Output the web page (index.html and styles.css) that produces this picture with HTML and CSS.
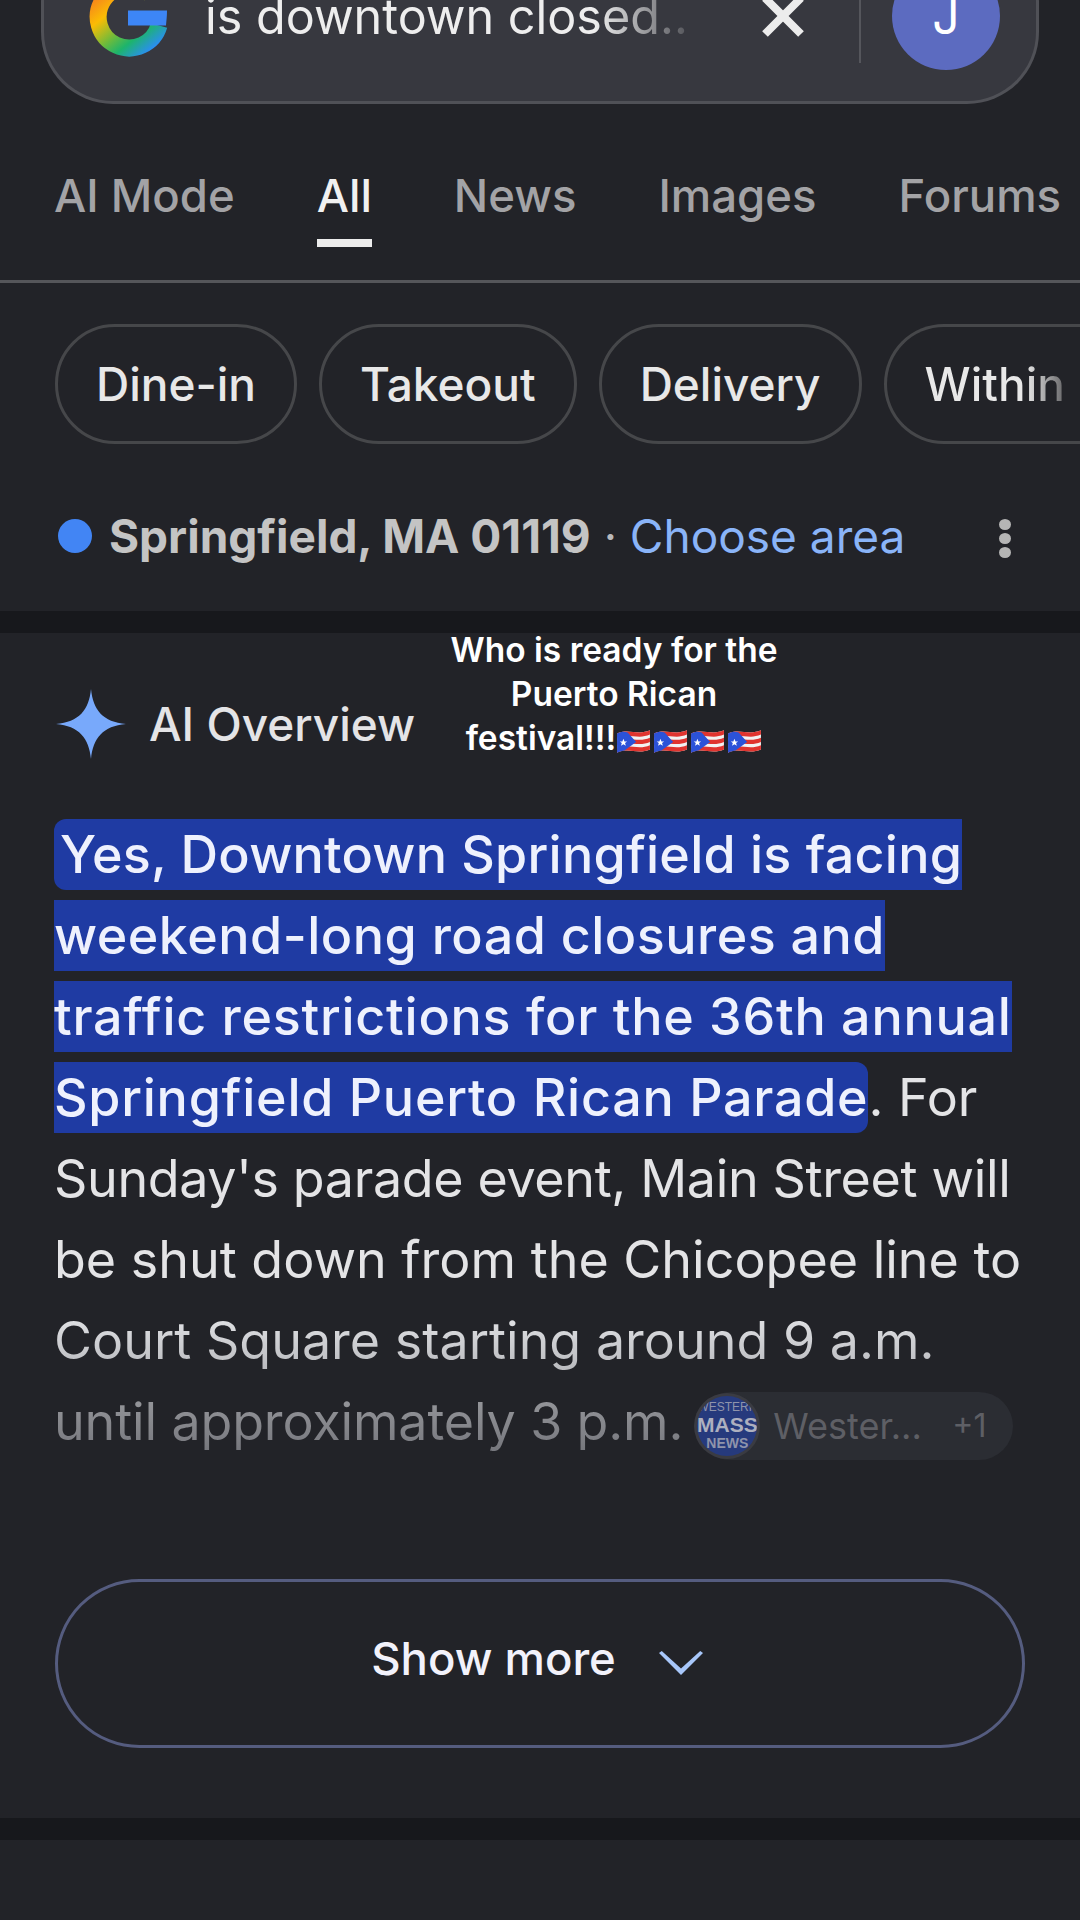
FILE: index.html
```html
<!DOCTYPE html>
<html lang="en">
<head>
  <meta charset="UTF-8">
  <title>is downtown closed</title>
  <link rel="stylesheet" href="styles.css">
</head>
<body>
  <!-- Search bar, cut by the top of the screen -->
  <div class="search">
    <svg class="g-logo" width="80" height="80" viewBox="0 0 80 80">
      <defs>
        <linearGradient id="g-grad" x1="0.1" y1="0" x2="0.9" y2="1">
          <stop offset="0" stop-color="#f57c1f"/>
          <stop offset="0.3" stop-color="#fbbc04"/>
          <stop offset="0.58" stop-color="#6cbb3c"/>
          <stop offset="0.76" stop-color="#1db46c"/>
          <stop offset="1" stop-color="#2a8ff0"/>
        </linearGradient>
      </defs>
      <path d="M71 47.5A31 31 0 1 1 62 16" fill="none" stroke="url(#g-grad)" stroke-width="17"/>
      <path d="M40 32.500H79C79 38 78.500 42 78 47.500H40Z" fill="#3d86f6"/>
    </svg>
    <div class="query">is downtown closed..</div>
    <svg class="clear" width="42" height="42" viewBox="0 0 42 42">
      <path d="M3 3L39 39M39 3L3 39" stroke="#ececec" stroke-width="8"/>
    </svg>
    <div class="divider"></div>
    <div class="avatar">J</div>
  </div>

  <div class="tabs">
    <div class="tab">AI Mode</div>
    <div class="tab active">All</div>
    <div class="tab">News</div>
    <div class="tab">Images</div>
    <div class="tab">Forums</div>
  </div>

  <div class="chips">
    <div class="chip">Dine-in</div>
    <div class="chip">Takeout</div>
    <div class="chip">Delivery</div>
    <div class="chip last">Within</div>
  </div>

  <div class="location">
    <div class="dot"></div>
    <div class="place"><b>Springfield, MA 01119</b> · <span class="area">Choose area</span></div>
    <div class="more"><i></i><i></i><i></i></div>
  </div>

  <div class="band"></div>

  <div class="overview">
    <div class="ai-head">
      <svg width="70" height="70" viewBox="0 0 70 70">
        <path d="M35 0C37 21 47 33 70 35C47 37 37 49 35 70C33 49 23 37 0 35C23 33 33 21 35 0Z" fill="#78a9fb"/>
      </svg>
      <div class="ai-title">AI Overview</div>
    </div>

    <!-- Caption laid over the screen recording -->
    <div class="caption">
      Who is ready for the<br>Puerto Rican<br>festival!!!<span class="flags">
        <svg class="flag" viewBox="0 0 33 25"><use href="#pr-flag"/></svg>
        <svg class="flag" viewBox="0 0 33 25"><use href="#pr-flag"/></svg>
        <svg class="flag" viewBox="0 0 33 25"><use href="#pr-flag"/></svg>
        <svg class="flag" viewBox="0 0 33 25"><use href="#pr-flag"/></svg>
      </span>
    </div>

    <p class="answer"><span class="hl"><span class="lead"></span><span class="tight-1">Yes, Downtown Springfield is facing</span><br><span class="tight-2">weekend-long road closures and</span><br>traffic restrictions for the 36th annual<br>Springfield Puerto Rican Parade</span>. For<br><span class="tight-3">Sunday's parade event, Main Street will</span><br>be shut down from the Chicopee line to<br><span class="dim">Court Square starting around 9 a.m.</span><br><span class="faded">until approximately 3 p.m.</span><span class="source"><span class="src-logo"><span class="l1">WESTERN</span><span class="l2">MASS</span><span class="l3">NEWS</span></span><span class="src-name">Wester...</span><span class="src-count">+1</span></span></p>

    <div class="show-more">
      <span>Show more</span>
      <svg width="44" height="26" viewBox="0 0 48 28">
        <path d="M0 3L3 1L24 20L45 1L48 3L24 27Z" fill="#a8c7fa"/>
      </svg>
    </div>
  </div>

  <div class="band"></div>

  <svg width="0" height="0" class="defs">
    <defs>
      <g id="pr-flag">
        <path d="M1 5C11 0 21 7 32 2V20C21 25 11 18 1 23Z" fill="#f2f2f2"/>
        <path d="M1 5C11 0 21 7 32 2V6C21 11 11 4 1 9ZM1 12C11 7 21 14 32 9V13C21 18 11 11 1 16ZM1 19C11 14 21 21 32 16V20C21 25 11 18 1 23Z" fill="#e0342f"/>
        <path d="M1 5C5 3 8 3 11 4L19 13L8 21C6 21 4 22 1 23Z" fill="#2b52d8"/>
        <path d="M7 10L8 12.5H10.500L8.500 14L9.300 16.500L7 15L4.700 16.500L5.500 14L3.500 12.500H6Z" fill="#fff"/>
      </g>
    </defs>
  </svg>
</body>
</html>
```

FILE: styles.css
```css
/* Basic reset */
* {
  box-sizing: border-box;
  margin: 0;
  padding: 0;
}

body {
  width: 1080px;
  height: 1920px;
  overflow: hidden;
  background-color: #222328;
  color: #e8e8ea;
  font-family: Inter, Roboto, "Liberation Sans", sans-serif;
}

.defs {
  position: absolute;
}

/* Search bar */
.search {
  display: flex;
  align-items: center;
  width: 998px;
  height: 173px;
  margin: -69px 0 0 41px;
  padding: 0 36px 0 44px;
  background-color: #37383f;
  border: 3px solid #505157;
  border-top: none;
  border-radius: 72px;
}

.g-logo {
  flex: none;
  margin-top: 3px;
  overflow: visible;
}

.query {
  width: 558px;
  margin-left: 37px;
  font-size: 48.5px;
  white-space: nowrap;
  color: #eeeeee;
  -webkit-mask-image: linear-gradient(to right, #000 70%, transparent 90%);
  mask-image: linear-gradient(to right, #000 70%, transparent 90%);
}

.clear {
  flex: none;
}

.divider {
  flex: none;
  align-self: flex-start;
  width: 2px;
  height: 132px;
  margin-left: 55px;
  background-color: #55565c;
}

.avatar {
  flex: none;
  display: flex;
  align-items: center;
  justify-content: center;
  width: 108px;
  height: 108px;
  margin-left: 31px;
  border-radius: 50%;
  background-color: #5c6bc0;
  color: #fff;
  font-size: 48px;
}

/* Tabs */
.tabs {
  display: flex;
  gap: 82px;
  height: 179px;
  padding: 62px 0 0 54px;
  border-bottom: 3px solid #55565a;
  white-space: nowrap;
  overflow: hidden;
}

.tab {
  position: relative;
  font-size: 45.5px;
  font-weight: 500;
  line-height: 60px;
  color: #a3a3a6;
}

.tab.active {
  color: #f1f1f1;
}

.tab.active::after {
  content: "";
  position: absolute;
  left: 0;
  right: 0;
  top: 73px;
  height: 8px;
  background-color: #ececec;
}

/* Filter chips */
.chips {
  display: flex;
  gap: 22px;
  padding: 41px 0 0 55px;
  white-space: nowrap;
  overflow: hidden;
}

.chip {
  flex: none;
  display: flex;
  align-items: center;
  justify-content: center;
  height: 120px;
  padding: 0 38px;
  border: 3px solid #46474a;
  border-radius: 60px;
  font-size: 46px;
  font-weight: 500;
  color: #e8e8e8;
}

.chip.last {
  justify-content: flex-start;
  width: 300px;
  border-right: none;
  border-radius: 60px 0 0 60px;
  color: transparent;
  background-image: linear-gradient(to right, #e8e8e8 139px, #6c6c6e 176px);
  background-clip: text;
  -webkit-background-clip: text;
}

/* Location row */
.location {
  display: flex;
  align-items: center;
  height: 167px;
  padding: 16px 0 0 58px;
  font-size: 46px;
  color: #b9b9bb;
}

.dot {
  flex: none;
  width: 34px;
  height: 34px;
  margin-right: 17px;
  border-radius: 50%;
  background-color: #4285f4;
}

.place {
  flex: 1;
  white-space: nowrap;
}

.place b {
  font-weight: 700;
  color: #c4c4c4;
}

.area {
  color: #8ab4f8;
}

.more {
  display: flex;
  flex-direction: column;
  gap: 3px;
  margin: 6px 69px 0 0;
}

.more i {
  width: 12px;
  height: 11px;
  border-radius: 50%;
  background-color: #b5b5b5;
}

.band {
  height: 22px;
  background-color: #17181c;
}

/* AI overview */
.overview {
  position: relative;
  height: 1185px;
  padding: 56px 0 0 56px;
}

.ai-head {
  display: flex;
  align-items: center;
  gap: 23px;
  height: 70px;
}

.ai-title {
  font-size: 46px;
  font-weight: 500;
  color: #e4e4e6;
}

.caption {
  position: absolute;
  left: 414px;
  top: -5px;
  width: 400px;
  font-size: 33.5px;
  font-weight: 600;
  line-height: 44px;
  text-align: center;
  color: #fff;
}

.flags {
  display: inline-flex;
  gap: 2px;
  vertical-align: -5px;
}

.flag {
  width: 35px;
  height: 27px;
}

.answer {
  width: 1026px;
  margin: 55px 0 0 -2px;
  font-size: 52px;
  line-height: 81px;
  letter-spacing: 0;
  white-space: nowrap;
  color: #e4e4e6;
}

.hl {
  padding: 4px 0;
  background-color: #1f3ba3;
  color: #eef1fd;
  font-weight: 500;
  letter-spacing: 0.75px;
  border-radius: 12px;
}

.lead {
  display: inline-block;
  width: 6px;
}

/* per line spacing, the text font runs a little wide on these */
.tight-1 {
  letter-spacing: 0.25px;
}

.tight-2 {
  letter-spacing: 0.5px;
}

.tight-3 {
  letter-spacing: -0.35px;
}

/* last lines fade out towards the button */
.dim {
  color: transparent;
  background-image: linear-gradient(#e6e7ea, #b8b9bd);
  background-clip: text;
  -webkit-background-clip: text;
}

.faded {
  color: transparent;
  letter-spacing: -0.15px;
  background-image: linear-gradient(#9a9b9f, #75767c);
  background-clip: text;
  -webkit-background-clip: text;
}

.source {
  display: inline-flex;
  align-items: center;
  width: 316px;
  height: 68px;
  margin-left: 14px;
  vertical-align: middle;
  border-radius: 34px;
  background-color: #2b2d33;
  line-height: 1;
  letter-spacing: 0;
}

.src-logo {
  flex: none;
  display: flex;
  flex-direction: column;
  align-items: center;
  justify-content: center;
  width: 60px;
  height: 60px;
  border-radius: 50%;
  overflow: hidden;
  background-color: #263a7d;
  box-shadow: 0 0 0 3px #3a3b42;
  font-family: "Liberation Sans", sans-serif;
  color: #8f94ab;
  font-weight: 700;
}

.l1 {
  font-size: 12px;
  font-weight: 400;
  white-space: nowrap;
}

.l2 {
  font-size: 21px;
  color: #aeb0bf;
  margin: 1px 0;
}

.l3 {
  font-size: 14px;
}

.src-name {
  margin-left: 16px;
  width: 179px;
  font-size: 36px;
  color: #5e5f65;
}

.src-count {
  font-size: 32px;
  color: #5e5f65;
}

.show-more {
  display: flex;
  align-items: center;
  justify-content: center;
  gap: 43px;
  width: 970px;
  height: 169px;
  margin: 117px 0 0 -1px;
  padding: 0 6px 10px 0;
  border: 3px solid #555c7f;
  border-radius: 85px;
  font-size: 45.5px;
  font-weight: 500;
  color: #f2f2fb;
}

.show-more svg {
  margin-top: 8px;
}
```
